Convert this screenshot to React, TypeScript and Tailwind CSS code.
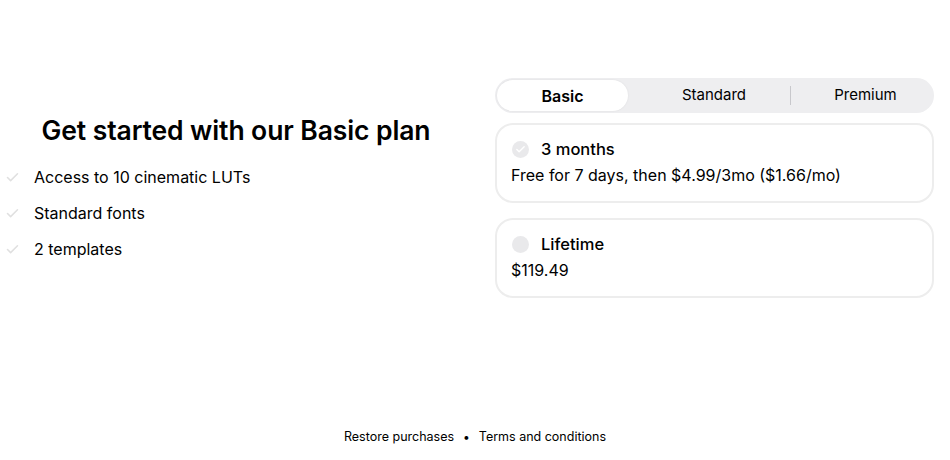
import { Check } from 'lucide-react';

const features = ['Access to 10 cinematic LUTs', 'Standard fonts', '2 templates'];

interface PlanCardProps {
  title: string;
  price: string;
  selected?: boolean;
}

function PlanCard({ title, price, selected }: PlanCardProps) {
  return (
    <div className="flex h-[80px] flex-col gap-[4px] rounded-[18px] border-2 border-[#ededed] bg-white pl-[14px] pr-4 pt-[13px]">
      <div className="flex h-[22px] items-center gap-[12px] pl-[1px]">
        <div className="flex h-[17px] w-[17px] items-center justify-center rounded-full bg-[#e9e9eb]">
          {selected ? <Check className="h-[11px] w-[11px] text-white" strokeWidth={3} /> : null}
        </div>
        <span className="text-[16.5px] font-medium text-black">{title}</span>
      </div>
      <p className="text-[16px] leading-[22px] text-black">{price}</p>
    </div>
  );
}

export default function App() {
  return (
    <div
      className="flex h-[460px] w-[950px] flex-col bg-white text-black"
      style={{ fontFamily: 'Inter, "Liberation Sans", sans-serif' }}
    >
      {/* Main */}
      <div className="flex flex-1 items-start pt-[78px]">
        {/* Left */}
        <div className="mt-[36px] flex w-[472px] flex-col">
          <h1 className="text-center text-[26.5px] font-semibold leading-[32px] tracking-[-0.1px]">
            Get started with our Basic plan
          </h1>
          <ul className="mt-[19px] flex flex-col gap-[12px] pl-[5px]">
            {features.map((f) => (
              <li key={f} className="flex h-[24px] items-center gap-[14px]">
                <Check className="h-[15px] w-[15px] text-[#e0e0e0]" strokeWidth={2.5} />
                <span className="text-[16px]">{f}</span>
              </li>
            ))}
          </ul>
        </div>

        {/* Right */}
        <div className="ml-[23px] flex w-[439px] flex-col">
          <div className="flex h-[35px] items-center rounded-full bg-[#eeeef0] p-[2px] text-[15px]">
            <div className="flex h-[31px] w-[131px] items-center justify-center rounded-full bg-white text-[16px] font-semibold shadow-[0_0_2px_rgba(0,0,0,0.08)]">
              Basic
            </div>
            <div className="flex h-full w-[162px] items-center justify-center pl-[10px]">Standard</div>
            <div className="h-[19px] w-px bg-[#c8c8cc]" />
            <div className="flex h-full w-[141px] items-center justify-center pl-[8px]">Premium</div>
          </div>
          <div className="mt-[10px] flex flex-col gap-[15px]">
            <PlanCard title="3 months" price="Free for 7 days, then $4.99/3mo ($1.66/mo)" selected />
            <PlanCard title="Lifetime" price="$119.49" />
          </div>
        </div>
      </div>

      {/* Footer */}
      <div className="flex h-[32px] items-start justify-center gap-[9px] text-[12.5px]">
        <span>Restore purchases</span>
        <span className="text-[12px]">•</span>
        <span>Terms and conditions</span>
      </div>
    </div>
  );
}
